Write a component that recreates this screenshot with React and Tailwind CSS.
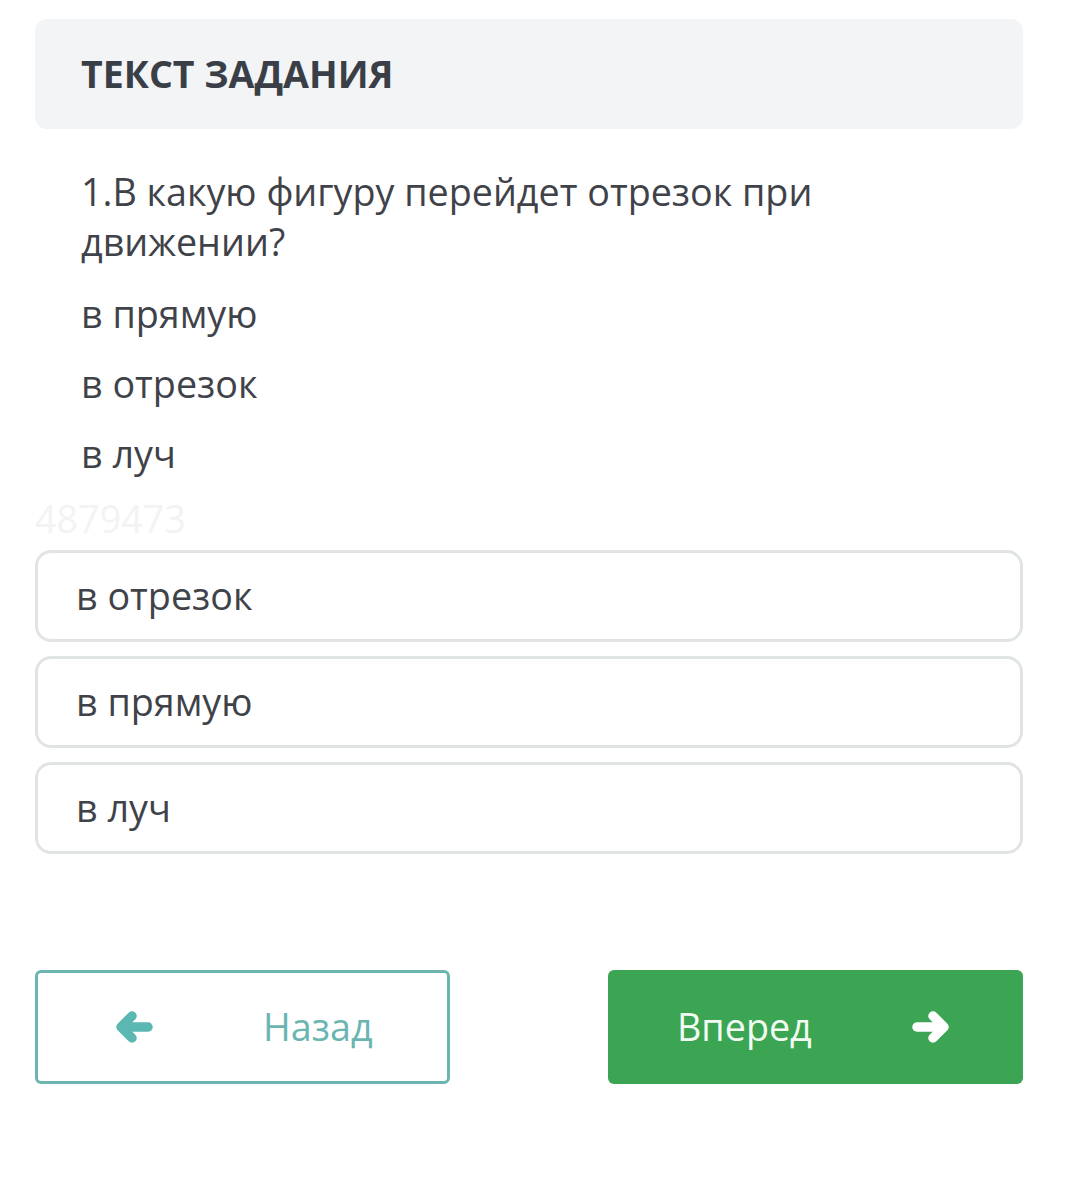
import React from "react";

function Arrow({ dir, color }) {
  return (
    <svg width="38" height="34" viewBox="0 0 38 34" className={dir === "right" ? "-scale-x-100" : ""}>
      <g fill="none" stroke={color} strokeWidth="9.5" strokeLinecap="round" strokeLinejoin="round">
        <path d="M17 6 L6 17 L17 28" />
        <path d="M8 17 H33" />
      </g>
      <path d="M6 17 L17 6 L17 28 Z" fill={color} />
    </svg>
  );
}

export default function App() {
  const font = { fontFamily: '"Open Sans", "Noto Sans", sans-serif' };
  return (
    <div className="w-[1068px] h-[1199px] bg-white" style={font}>
      <div className="pt-[19px] px-[35px] w-[1058px]">
        <div className="h-[110px] rounded-[12px] bg-[#f3f4f6] flex items-center pl-[46px]">
          <span className="text-[37.5px] font-bold text-[#3a3f47]">ТЕКСТ ЗАДАНИЯ</span>
        </div>
        <div className="pl-[46px] pt-[38px] text-[37.7px] text-[#3f4349] leading-[50px]">
          <p>1.В какую фигуру перейдет отрезок при<br />движении?</p>
          <p className="mt-[22px]">в прямую</p>
          <p className="mt-[20px]">в отрезок</p>
          <p className="mt-[20px]">в луч</p>
        </div>
        <div className="mt-[20px] h-[40px] flex items-center text-[37.7px] text-[#f3f3f3] leading-none">4879473</div>
        <div className="mt-[11px] flex flex-col gap-[14px]">
          {["в отрезок", "в прямую", "в луч"].map((t) => (
            <div key={t} className="h-[92px] rounded-[16px] border-[3px] border-[#e0e4e4] flex items-center pl-[38px] text-[37.7px] text-[#3f4349]">
              {t}
            </div>
          ))}
        </div>
        <div className="mt-[116px] flex justify-between">
          <button className="w-[415px] h-[114px] rounded-[6px] border-[3px] border-[#6bb4b0] flex items-center pl-[77px] bg-white">
            <Arrow dir="left" color="#5bb7b2" />
            <span className="ml-[110px] text-[37.7px] text-[#6ab5b1]">Назад</span>
          </button>
          <button className="w-[415px] h-[114px] rounded-[6px] bg-[#3ba553] flex items-center pl-[69px]">
            <span className="text-[37.7px] text-[#f2fbf2]">Вперед</span>
            <span className="ml-[100px] flex"><Arrow dir="right" color="#ffffff" /></span>
          </button>
        </div>
      </div>
    </div>
  );
}
